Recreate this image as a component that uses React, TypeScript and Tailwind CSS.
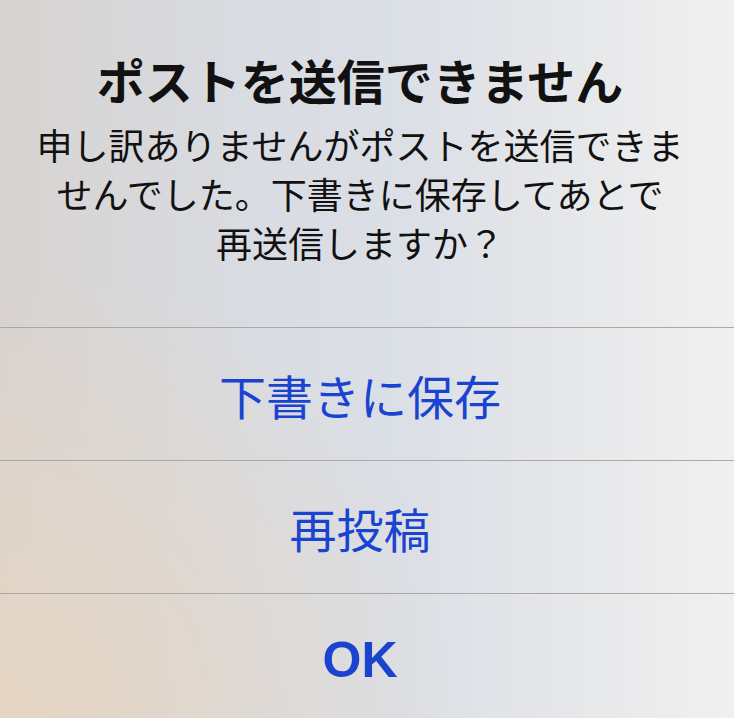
const jp = "font-['Noto_Sans_CJK_JP','Noto_Sans',sans-serif]";

const ActionRow = ({ label, bold = false }: { label: string; bold?: boolean }) => (
  <div className="h-[133px] shrink-0 border-t border-[#a9a9a9] flex items-center justify-center pr-[14px]">
    {bold ? (
      <span className="font-['Liberation_Sans',sans-serif] font-bold text-[50px] leading-none text-[#1a43d0]">
        {label}
      </span>
    ) : (
      <span className={`${jp} text-[47px] leading-none text-[#1a43d0]`}>{label}</span>
    )}
  </div>
);

export default function App() {
  return (
    <div className="w-[734px] h-[718px] overflow-hidden flex flex-col bg-[radial-gradient(ellipse_at_0%_100%,#e6d6c4_0%,rgba(230,214,196,0)_45%),linear-gradient(90deg,#d7d3d1_0%,#d9dce2_35%,#dbdfe6_55%,#e7e8ea_80%,#f0f0f0_100%)]">
      <div className="h-[327px] shrink-0 flex flex-col items-center pt-[50px] pr-[14px] text-[#111]">
        <div className={`${jp} font-bold text-[48px] leading-[58px]`}>ポストを送信できません</div>
        <div className={`${jp} mt-[12px] text-[36px] leading-[49px] text-center`}>
          申し訳ありませんがポストを送信できま
          <br />
          せんでした。下書きに保存してあとで
          <br />
          再送信しますか？
        </div>
      </div>
      <ActionRow label="下書きに保存" />
      <ActionRow label="再投稿" />
      <ActionRow label="OK" bold />
    </div>
  );
}
